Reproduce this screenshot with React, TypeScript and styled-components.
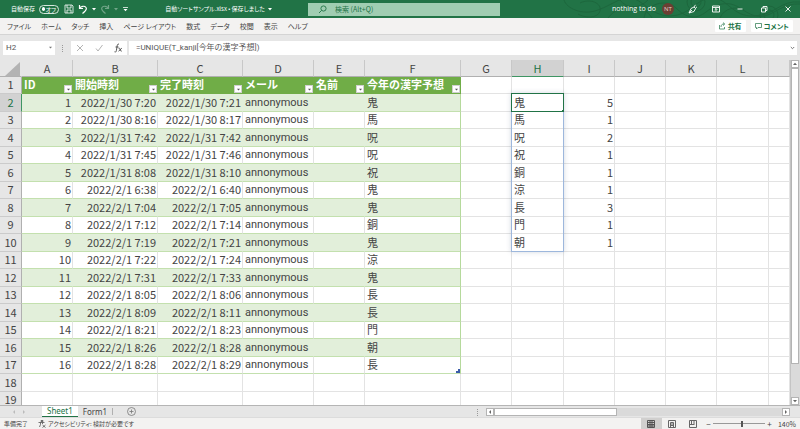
import React, { useState } from "react";
import styled, { createGlobalStyle, css } from "styled-components";

const GREEN = "#217346";
const JP = `"Noto Sans CJK JP", sans-serif`;
const MIXED = `Roboto, "Noto Sans CJK JP", sans-serif`;

const GlobalStyle = createGlobalStyle`
  *, *::before, *::after { box-sizing: border-box; }
  body { margin: 0; font-family: ${JP}; color: #444; }
  button, input { font: inherit; color: inherit; margin: 0; padding: 0; border: 0; background: none; border-radius: 0; outline: none; }
  svg { display: block; flex: none; }
`;

const Shell = styled.div`
  display: flex;
  flex-direction: column;
  height: 100vh;
  overflow: hidden;
  background: #e6e6e6;
`;

/* ---------- title bar ---------- */

const TitleBar = styled.header`
  position: relative;
  display: grid;
  grid-template-columns: 77fr 48fr 75fr;
  align-items: center;
  height: 18px;
  flex: none;
  background: ${GREEN};
  color: #fff;
  font-size: 7px;
  line-height: 12px;
  font-feature-settings: "palt";
  white-space: nowrap;
`;

const Swirls = styled.svg`
  position: absolute;
  right: 0;
  top: 0;
`;

const TitleLeft = styled.div`
  display: flex;
  align-items: center;
  justify-content: space-between;
  padding: 0 36px 0 11px;
  font-size: 6px;
`;

const QuickAccess = styled.div`
  display: flex;
  align-items: center;
  gap: 4px;
`;

const AutoSave = styled.label`
  display: flex;
  align-items: center;
  gap: 4px;
  margin-right: 1px;
`;

const Toggle = styled.button`
  display: flex;
  align-items: center;
  justify-content: space-between;
  width: 20px;
  height: 9px;
  padding: 0 2px;
  border: 1px solid #d5e6dc;
  border-radius: 5px;
  line-height: 7px;

  &::before {
    content: "";
    width: 4px;
    height: 4px;
    border-radius: 50%;
    background: #fff;
  }
`;

const IconButton = styled.button<{ $w?: number; $faint?: boolean }>`
  display: flex;
  align-items: center;
  justify-content: center;
  width: ${(p) => p.$w ?? 10}px;
  height: 12px;
  opacity: ${(p) => (p.$faint ? 0.35 : 1)};
`;

const FileName = styled.button`
  display: flex;
  align-items: center;
  gap: 3px;
`;

const SearchBox = styled.label`
  display: flex;
  align-items: center;
  gap: 8px;
  height: 13px;
  padding-left: 10px;
  background: #a0cdb2;
  color: ${GREEN};
`;

const SearchInput = styled.input`
  flex: 1;
  min-width: 0;
  height: 12px;
  font-size: 7px;
  &::placeholder { color: ${GREEN}; opacity: 1; }
`;

const TitleRight = styled.div`
  position: relative;
  display: flex;
  align-items: center;
  justify-content: flex-end;
  padding-right: 6px;
`;

const Account = styled.button`
  display: flex;
  align-items: center;
  gap: 6px;
  margin-right: 12px;
  font-family: "Open Sans", sans-serif;
`;

const Avatar = styled.span`
  width: 12px;
  height: 12px;
  border-radius: 50%;
  background: #6b3f33;
  color: #e4cfc8;
  font-size: 6px;
  line-height: 12px;
  text-align: center;
`;

const WindowButtons = styled.div`
  display: flex;
  gap: 12px;
`;

/* ---------- ribbon ---------- */

const Ribbon = styled.nav`
  display: flex;
  align-items: center;
  justify-content: space-between;
  height: 16px;
  flex: none;
  padding: 0 7px;
  background: #f3f2f1;
  font-size: 7px;
  line-height: 12px;
  font-feature-settings: "palt";
  white-space: nowrap;
`;

const RibbonGroup = styled.div<{ $gap: number }>`
  display: flex;
  align-items: center;
  gap: ${(p) => p.$gap}px;
`;

const ActionButton = styled.button`
  display: flex;
  align-items: center;
  gap: 2px;
  height: 12px;
  padding: 0 4px;
  border-radius: 1px;
  background: #fff;
  color: ${GREEN};
  font-weight: 700;
`;

/* ---------- formula bar ---------- */

const FormulaBar = styled.div`
  display: flex;
  align-items: center;
  height: 26px;
  flex: none;
  padding: 0 3px;
  border-top: 1px solid #d4d4d4;
  font-family: ${MIXED};
  font-size: 8px;
  line-height: 14px;
`;

const NameBox = styled.div`
  display: flex;
  align-items: center;
  width: 52px;
  height: 14px;
  padding: 0 3px;
  background: #fff;
`;

const BarInput = styled.input`
  flex: 1;
  min-width: 0;
  height: 14px;
  color: #555;
`;

const Dots = styled.svg`
  margin: 0 7px;
`;

const FormulaTools = styled.div`
  display: flex;
  align-items: center;
  justify-content: space-around;
  width: 56px;
  height: 14px;
  margin-right: 2px;
  background: #fff;
`;

const FormulaField = styled.div`
  display: flex;
  align-items: center;
  flex: 1;
  height: 14px;
  padding: 0 2px 0 7px;
  background: #fff;
`;

/* ---------- sheet ---------- */

const SheetArea = styled.main`
  display: flex;
  flex: 1;
  min-height: 0;
  border-bottom: 1px solid #b5b5b5;
`;

const GridView = styled.div`
  flex: 1;
  min-width: 0;
  overflow: hidden;
  background: #fff;
`;

const Grid = styled.table`
  width: 100%;
  table-layout: fixed;
  border-collapse: separate;
  border-spacing: 0;
  font-size: 11px;
  line-height: 14px;
  white-space: nowrap;
`;

const Col = styled.col<{ $w?: number }>`
  width: ${(p) => (p.$w ? `${p.$w}px` : "auto")};
`;

const Row = styled.tr<{ $tall: boolean }>`
  height: ${(p) => (p.$tall ? 18 : 17)}px;
`;

const ColHead = styled.th<{ $active?: boolean }>`
  height: 17px;
  padding: 0;
  border-right: 1px solid #c8c8c8;
  border-bottom: 1px solid ${(p) => (p.$active ? "#3f9563" : "#b0b0b0")};
  background: ${(p) => (p.$active ? "#d2d2d2" : "#e6e6e6")};
  color: ${(p) => (p.$active ? GREEN : "#444")};
  font-weight: 400;
`;

const Corner = styled(ColHead)`
  border-right-color: #e6e6e6;

  svg { margin: 1px 1px 0 auto; }
`;

const RowHead = styled.th<{ $active?: boolean }>`
  padding: 0 0 2px;
  border-right: 1px solid ${(p) => (p.$active ? "#3f9563" : "#b0b0b0")};
  border-bottom: 1px solid #cbcbcb;
  background: ${(p) => (p.$active ? "#d2d2d2" : "#e6e6e6")};
  color: ${(p) => (p.$active ? GREEN : "#444")};
  font-weight: 400;
`;

const Cell = styled.td<{ $align?: "right"; $table?: boolean; $band?: boolean; $last?: boolean; $mixed?: boolean }>`
  position: relative;
  padding: 0 1px 2px 2px;
  border-right: 1px solid #e3e3e3;
  border-bottom: 1px solid #e3e3e3;
  text-align: ${(p) => p.$align ?? "left"};
  ${(p) =>
    p.$mixed &&
    css`
      padding-bottom: 0;
      font-family: ${MIXED};
    `}
  ${(p) =>
    p.$table &&
    css`
      border-bottom-color: #c3e0ae;
      background: ${p.$band ? "#e2efda" : "#fff"};
      border-right-color: ${p.$last ? "#b5d99c" : p.$band ? "#e2efda" : "#e3e3e3"};
    `}
`;

const FieldHead = styled.th`
  position: relative;
  padding: 0 0 2px 2px;
  border-bottom: 1px solid #70ad47;
  background: #70ad47;
  color: #fff;
  text-align: left;
`;

const FilterButton = styled.button`
  position: absolute;
  right: 1px;
  bottom: 0;
  display: flex;
  align-items: center;
  justify-content: center;
  width: 8px;
  height: 8px;
  border: 1px solid #d0d0d0;
  background: #fff;
`;

const SpillRange = styled.div`
  position: absolute;
  z-index: 1;
  left: -1px;
  right: -1px;
  top: -1px;
  height: 159px;
  border: 1px solid #9db7dc;
  box-shadow: 0 0 5px rgba(60, 80, 120, 0.22);
`;

const ActiveCell = styled.div`
  position: absolute;
  z-index: 2;
  left: -1px;
  right: -1px;
  top: -1px;
  bottom: -1px;
  border: 1px solid ${GREEN};

  &::after {
    content: "";
    position: absolute;
    right: -1px;
    bottom: -1px;
    width: 2px;
    height: 2px;
    background: ${GREEN};
  }
`;

const TableHandle = styled.svg`
  position: absolute;
  right: 0;
  bottom: 0;
`;

/* ---------- scroll bars ---------- */

const VScroll = styled.div`
  display: flex;
  flex-direction: column;
  width: 10px;
  flex: none;
  padding-right: 1px;
  border-left: 1px solid #c4c4c4;
  background: #dadada;
`;

const ScrollButton = styled.button`
  display: flex;
  align-items: center;
  justify-content: center;
  width: 8px;
  height: 8px;
  flex: none;
  border: 1px solid #b4b4b4;
  background: #fff;
`;

const VTrack = styled.div`
  flex: 1;
  display: grid;
  grid-template-rows: 9fr 1fr;
`;

const Thumb = styled.div`
  border: 1px solid #b4b4b4;
  background: #fff;
`;

const HScroll = styled.div`
  display: flex;
  align-items: center;
  width: 39%;
`;

const HTrack = styled.div`
  flex: 1;
  display: grid;
  grid-template-columns: 3fr 4fr;
  height: 8px;
  background: #dadada;
`;

/* ---------- sheet tabs and status ---------- */

const TabStrip = styled.div`
  display: flex;
  align-items: center;
  height: 11px;
  flex: none;
  padding: 0 10px;
  font-family: "Noto Sans", sans-serif;
  font-size: 8px;
  line-height: 10px;
`;

const TabNav = styled.div`
  display: flex;
  gap: 3px;
  width: 32px;
`;

const SheetTab = styled.button<{ $active?: boolean }>`
  height: 11px;
  padding: 0 5px;
  ${(p) =>
    p.$active &&
    css`
      background: #fff;
      color: ${GREEN};
      border-bottom: 1px solid ${GREEN};
    `}
`;

const TabDivider = styled.span`
  width: 1px;
  height: 7px;
  margin-right: 13px;
  background: #b0b0b0;
`;

const Spacer = styled.span`
  flex: 1;
`;

const StatusBar = styled.footer`
  display: flex;
  align-items: center;
  justify-content: space-between;
  height: 12px;
  flex: none;
  padding: 0 4px;
  border-top: 1px solid #dcdcdc;
  background: #f3f2f1;
  font-size: 6px;
  line-height: 10px;
  font-feature-settings: "palt";
`;

const StatusGroup = styled.div`
  display: flex;
  align-items: center;
`;

const AccessButton = styled.button`
  display: flex;
  align-items: center;
  gap: 2px;
  margin-left: 10px;
`;

const ViewButton = styled.button<{ $on?: boolean }>`
  display: flex;
  align-items: center;
  justify-content: center;
  width: 21px;
  height: 11px;
  background: ${(p) => (p.$on ? "#d0cfce" : "transparent")};
`;

const ZoomButton = styled.button`
  width: 9px;
  height: 10px;
  font-size: 8px;
`;

const ZoomSlider = styled.input`
  appearance: none;
  width: 52px;
  height: 9px;
  background: linear-gradient(#999, #999) center / 100% 1px no-repeat;

  &::-webkit-slider-thumb {
    appearance: none;
    width: 2px;
    height: 6px;
    background: #555;
  }
`;

const ZoomValue = styled.span`
  margin-left: 4px;
  font-size: 7px;
`;

/* ---------- data ---------- */

const fields = ["ID", "開始時刻", "完了時刻", "メール", "名前", "今年の漢字予想"];

const answers: [string, string, string][] = [
  ["2022/1/30 7:20", "2022/1/30 7:21", "鬼"],
  ["2022/1/30 8:16", "2022/1/30 8:17", "馬"],
  ["2022/1/31 7:42", "2022/1/31 7:42", "呪"],
  ["2022/1/31 7:45", "2022/1/31 7:46", "呪"],
  ["2022/1/31 8:08", "2022/1/31 8:10", "祝"],
  ["2022/2/1 6:38", "2022/2/1 6:40", "鬼"],
  ["2022/2/1 7:04", "2022/2/1 7:05", "鬼"],
  ["2022/2/1 7:12", "2022/2/1 7:14", "銅"],
  ["2022/2/1 7:19", "2022/2/1 7:21", "鬼"],
  ["2022/2/1 7:22", "2022/2/1 7:24", "涼"],
  ["2022/2/1 7:31", "2022/2/1 7:33", "鬼"],
  ["2022/2/1 8:05", "2022/2/1 8:06", "長"],
  ["2022/2/1 8:09", "2022/2/1 8:11", "長"],
  ["2022/2/1 8:21", "2022/2/1 8:23", "門"],
  ["2022/2/1 8:26", "2022/2/1 8:28", "朝"],
  ["2022/2/1 8:28", "2022/2/1 8:29", "長"],
];

const counts: [string, number][] = [
  ["鬼", 5], ["馬", 1], ["呪", 2], ["祝", 1], ["銅", 1], ["涼", 1], ["長", 3], ["門", 1], ["朝", 1],
];

const widths = [22, 51, 85, 85, 71, 51, 96, 51, 52, 51, 51, 51, 52];
const letters = ["A", "B", "C", "D", "E", "F", "G", "H", "I", "J", "K", "L"];
const menu = ["ファイル", "ホーム", "タッチ", "挿入", "ページ レイアウト", "数式", "データ", "校閲", "表示", "ヘルプ"];

/* ---------- icons ---------- */

const Caret = ({ color = "#fff", size = 4 }: { color?: string; size?: number }) => (
  <svg width={size} height={size} viewBox="0 0 4 4"><path d="M0 1h4L2 3.4z" fill={color} /></svg>
);

const Arrow = ({ d, color = "#666" }: { d: string; color?: string }) => (
  <svg width="4" height="4" viewBox="0 0 4 4"><path d={d} fill={color} /></svg>
);

const Line = ({ d, w = 10, h = 10, stroke = "currentColor", sw = 0.9 }: { d: string; w?: number; h?: number; stroke?: string; sw?: number }) => (
  <svg width={w} height={h} viewBox={`0 0 ${w} ${h}`} fill="none" stroke={stroke} strokeWidth={sw}><path d={d} /></svg>
);

function TitleSection() {
  return (
    <TitleBar>
      <Swirls width="240" height="18" viewBox="0 0 240 18" fill="none" stroke="#1d673d" strokeWidth="1">
        <path d="M4 0c2 8 18 16 34 10S58-2 70-2s20 18 40 18S136-2 152-2s20 19 42 18S220 0 240 2" />
        <path d="M20 3c10-5 22 0 20 8S24 18 18 14M84 18c2-14 22-20 32-10s20 12 30 4 22-12 34-4 20 12 34 4 18-8 26-8" />
        <circle cx="136" cy="2" r="9" /><circle cx="136" cy="2" r="5" />
        <circle cx="209" cy="15" r="9" /><circle cx="209" cy="15" r="5" />
        <path d="M48 18C60 2 84 4 92 18M160 18c4-10 16-12 24-8M60 0c6 8 18 10 28 0" />
      </Swirls>
      <TitleLeft>
        <QuickAccess>
          <AutoSave>自動保存<Toggle role="switch" aria-checked="false">オフ</Toggle></AutoSave>
          <IconButton aria-label="上書き保存"><Line sw={0.8} d="M1 1h7l1 1v7H1zM3 1v3h4V1M3 9V6h4v3" /></IconButton>
          <IconButton aria-label="元に戻す"><Line d="M1.500 1v3.500H5M1.500 4.500C3 2 6.500 1.500 8 3.500S7 7.500 4.500 9.500" sw={1.2} /></IconButton>
          <IconButton $w={4} aria-label="元に戻す履歴"><Caret /></IconButton>
          <IconButton $faint aria-label="やり直し"><Line d="M8.500 1v3.500H5M8.500 4.500C7 2 3.500 1.500 2 3.500S3 7.500 5.500 9.500" sw={1.2} /></IconButton>
          <IconButton $w={4} $faint aria-label="やり直し履歴"><Caret /></IconButton>
          <IconButton $w={6} aria-label="カスタマイズ">
            <svg width="5" height="6" viewBox="0 0 5 6" fill="#fff"><path d="M0 1h5v.8H0zM.5 3h4L2.500 5.300z" /></svg>
          </IconButton>
        </QuickAccess>
        <FileName>自動ソートサンプル.xlsx • 保存しました<Caret /></FileName>
      </TitleLeft>
      <SearchBox>
        <svg width="9" height="9" viewBox="0 0 9 9" fill="none" stroke={GREEN} strokeWidth="0.900"><circle cx="5.500" cy="3.500" r="2.600" /><path d="M3.600 5.400L1 8" /></svg>
        <SearchInput aria-label="検索" placeholder="検索 (Alt+Q)" />
      </SearchBox>
      <TitleRight>
        <Account>nothing to do<Avatar>NT</Avatar></Account>
        <WindowButtons>
          <IconButton $w={12} aria-label="ペン"><Line d="M2 9L4 4.500L7 3L8.500 4.500L7 7.500L2 9L5 6M7 3L8.500 .8M8.500 4.500L10 2.500" /></IconButton>
          <IconButton $w={12} aria-label="リボンの表示オプション"><Line d="M1.500 2h7v6h-7zM1.500 3.500h7M5 7.500V4.500M3.700 5.800L5 4.500L6.300 5.800" /></IconButton>
          <IconButton $w={12} aria-label="最小化"><Line d="M2.500 5h5" /></IconButton>
          <IconButton $w={12} aria-label="元のサイズに戻す"><Line d="M2.500 4h4v4h-4zM4 4V2.500h4V6.500H6.500" /></IconButton>
          <IconButton $w={12} aria-label="閉じる"><Line d="M2.500 2.500l5 5M7.500 2.500l-5 5" /></IconButton>
        </WindowButtons>
      </TitleRight>
    </TitleBar>
  );
}

function RibbonSection() {
  return (
    <Ribbon>
      <RibbonGroup $gap={10}>{menu.map((m) => <button key={m}>{m}</button>)}</RibbonGroup>
      <RibbonGroup $gap={5}>
        <ActionButton><Line w={7} h={8} sw={0.7} d="M.5 3v4h5V5M2 5c0-2 1-3 3-3M4 .6L5.800 2L4 3.600" />共有</ActionButton>
        <ActionButton><Line w={7} h={8} sw={0.7} d="M.5 1.500h6v4H3L1.500 7V5.500h-1z" />コメント</ActionButton>
      </RibbonGroup>
    </Ribbon>
  );
}

function FormulaSection() {
  return (
    <FormulaBar>
      <NameBox><BarInput aria-label="名前ボックス" defaultValue="H2" /><Caret color="#777" size={3} /></NameBox>
      <Dots width="2" height="8" viewBox="0 0 2 8" fill="#999"><path d="M0 1h1v1H0zM0 3h1v1H0zM0 5h1v1H0zM0 7h1v1H0z" /></Dots>
      <FormulaTools>
        <IconButton aria-label="キャンセル"><Line stroke="#aaa" d="M2 2l6 6M8 2l-6 6" /></IconButton>
        <IconButton aria-label="入力"><Line stroke="#aaa" d="M2 5.500L4 8l4.500-6" /></IconButton>
        <IconButton aria-label="関数の挿入"><Line stroke="#444" d="M6 1.200C4.500.6 4.200 2 4 4L3.400 7.500C3.200 9 2.500 9.300 1.500 8.800M2.500 4h3M5.500 5.200c1-.4 1.400.3 1.600 1.300S7.800 8.500 8.800 8M8.800 5.200L5.500 8.200" /></IconButton>
      </FormulaTools>
      <FormulaField>
        <BarInput aria-label="数式バー" defaultValue="=UNIQUE(T_kanji[今年の漢字予想])" />
        <IconButton $w={6} aria-label="数式バーの展開"><Line w={5} h={4} stroke="#666" d="M.8 1l1.700 1.700L4.200 1" /></IconButton>
      </FormulaField>
    </FormulaBar>
  );
}

function SheetRow({ n }: { n: number }) {
  const i = n - 2;
  const answer = answers[i];
  const count = counts[i];
  const band = n % 2 === 0;
  const isLast = i === answers.length - 1;
  return (
    <Row $tall={band}>
      <RowHead scope="row" $active={n === 2}>{n}</RowHead>
      {n === 1 && fields.map((f) => (
        <FieldHead key={f} scope="col">{f}<FilterButton aria-label={`${f} のフィルター`}><Caret color="#555" size={3} /></FilterButton></FieldHead>
      ))}
      {answer && (
        <>
          <Cell $table $band={band} $align="right">{n - 1}</Cell>
          <Cell $table $band={band} $align="right">{answer[0]}</Cell>
          <Cell $table $band={band} $align="right">{answer[1]}</Cell>
          <Cell $table $band={band} $mixed>annonymous</Cell>
          <Cell $table $band={band} />
          <Cell $table $band={band} $last>
            {answer[2]}
            {isLast && <TableHandle width="4" height="4" viewBox="0 0 4 4"><path d="M2 0h2v4H0V2h2z" fill="#3b5ba9" /></TableHandle>}
          </Cell>
        </>
      )}
      {n > 17 && fields.map((f) => <Cell key={f} />)}
      <Cell />
      <Cell>
        {count?.[0]}
        {n === 2 && <><SpillRange /><ActiveCell /></>}
      </Cell>
      <Cell $align="right">{count?.[1]}</Cell>
      <Cell /><Cell /><Cell /><Cell />
    </Row>
  );
}

export default function App() {
  const [zoom, setZoom] = useState(140);
  return (
    <Shell>
      <GlobalStyle />
      <TitleSection />
      <RibbonSection />
      <FormulaSection />
      <SheetArea>
        <GridView>
          <Grid>
            <colgroup>{widths.map((w, i) => <Col key={i} $w={w} />)}<Col /></colgroup>
            <thead>
              <tr>
                <Corner aria-label="すべて選択"><svg width="15" height="14" viewBox="0 0 15 14"><path d="M15 0v14H0z" fill="#b3b3b3" /></svg></Corner>
                {letters.map((l) => <ColHead key={l} scope="col" $active={l === "H"}>{l}</ColHead>)}
                <ColHead />
              </tr>
            </thead>
            <tbody>{Array.from({ length: 19 }, (_, i) => <SheetRow key={i} n={i + 1} />)}</tbody>
          </Grid>
        </GridView>
        <VScroll>
          <ScrollButton aria-label="上へ"><Arrow d="M0 3h4L2 .8z" /></ScrollButton>
          <VTrack><Thumb /></VTrack>
          <ScrollButton aria-label="下へ"><Arrow d="M0 1h4L2 3.200z" /></ScrollButton>
        </VScroll>
      </SheetArea>
      <TabStrip>
        <TabNav>
          <IconButton $w={7} aria-label="前のシート"><Arrow color="#bbb" d="M3 0v4L1 2z" /></IconButton>
          <IconButton $w={7} aria-label="次のシート"><Arrow color="#bbb" d="M1 0v4l2-2z" /></IconButton>
        </TabNav>
        <SheetTab $active>Sheet1</SheetTab>
        <SheetTab>Form1</SheetTab>
        <TabDivider />
        <IconButton aria-label="新しいシート">
          <svg width="9" height="9" viewBox="0 0 9 9" fill="none" stroke="#777" strokeWidth="0.800"><circle cx="4.500" cy="4.500" r="4" /><path d="M2.500 4.500h4M4.500 2.500v4" /></svg>
        </IconButton>
        <Spacer />
        <Dots width="2" height="8" viewBox="0 0 2 8" fill="#999"><path d="M0 1h1v1H0zM0 3h1v1H0zM0 5h1v1H0zM0 7h1v1H0z" /></Dots>
        <HScroll>
          <ScrollButton aria-label="左へ"><Arrow d="M3 0v4L1 2z" /></ScrollButton>
          <HTrack><Thumb /></HTrack>
          <ScrollButton aria-label="右へ"><Arrow d="M1 0v4l2-2z" /></ScrollButton>
        </HScroll>
      </TabStrip>
      <StatusBar>
        <StatusGroup>
          準備完了
          <AccessButton><Line w={8} h={8} sw={0.8} stroke="#555" d="M3 .5h2v1H3zM.5 2.500h6M2.500 2.500v2L1.500 7M4.500 2.500v1.500M4.500 5l3 2.500M7.500 5l-3 2.500" />アクセシビリティ: 検討が必要です</AccessButton>
        </StatusGroup>
        <StatusGroup>
          <ViewButton $on aria-label="標準"><Line w={8} h={8} sw={1} stroke="#555" d="M.5 .5h7v7h-7zM.5 2.500h7M.5 4.500h7M.5 6h7M3 .5v7M5 .5v7" /></ViewButton>
          <ViewButton aria-label="ページ レイアウト"><Line w={8} h={8} sw={1} stroke="#666" d="M.5 .5h7v7h-7zM2.500 2.500h3v5h-3zM2.500 4h3M2.500 5.500h3" /></ViewButton>
          <ViewButton aria-label="改ページ プレビュー"><Line w={8} h={8} sw={1} stroke="#666" d="M.5 .5h7v7h-7zM2.500 .5v3.500M5 .5v3.500M.5 4.500h5" /></ViewButton>
          <ZoomButton aria-label="縮小">−</ZoomButton>
          <ZoomSlider type="range" aria-label="ズーム" min={10} max={240} value={zoom} onChange={(e) => setZoom(Number(e.target.value))} />
          <ZoomButton aria-label="拡大">+</ZoomButton>
          <ZoomValue>{zoom}%</ZoomValue>
        </StatusGroup>
      </StatusBar>
    </Shell>
  );
}
